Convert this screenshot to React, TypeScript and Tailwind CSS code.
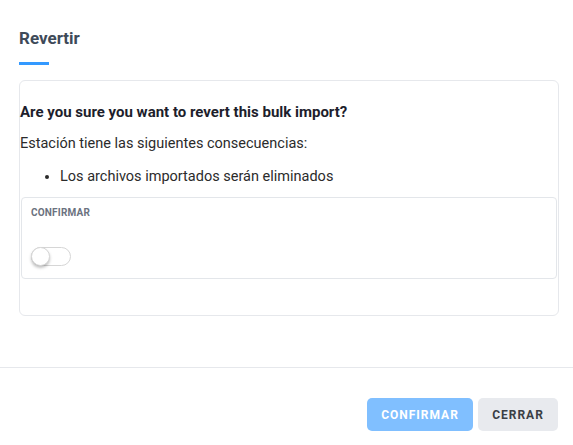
import React from "react";

export default function App() {
  return (
    <div className="w-[573px] h-[445px] bg-white flex flex-col" style={{ fontFamily: "Roboto, 'Noto Sans', sans-serif" }}>
      <div className="px-[19px] pt-[28px]">
        <div className="text-[17px] leading-[20px] font-bold text-[#3e4a59]">Revertir</div>
        <div className="mt-[14px] w-[30px] h-[3px] bg-[#3399ff]" />
        <div className="mt-[15px] w-[540px] h-[236px] border border-[#e6e8ec] rounded-[6px] flex flex-col">
          <div className="pt-[20px] text-[15px] leading-[22px] font-bold text-[#1d1e2c]">Are you sure you want to revert this bulk import?</div>
          <div className="mt-[10px] text-[14.5px] leading-[22px] text-[#2b2b2b]">Estación tiene las siguientes consecuencias:</div>
          <ul className="mt-[11px] list-disc pl-[40px] text-[14.5px] leading-[22px] text-[#2b2b2b]">
            <li>Los archivos importados serán eliminados</li>
          </ul>
          <div className="mt-[9px] mx-[1px] h-[82px] border border-[#e3e6ea] rounded-[4px] px-[9px] pt-[8px] flex flex-col">
            <div className="text-[10px] leading-[14px] font-bold text-[#6b7280] tracking-[0.2px]">CONFIRMAR</div>
            <div className="mt-[27px] w-[40px] h-[19px] rounded-full border border-[#d6d6d6] bg-white relative">
              <div className="absolute left-[-1px] top-[-1px] w-[19px] h-[19px] rounded-full bg-white border border-[#d6d6d6] shadow-[0_2px_3px_rgba(0,0,0,0.25)]" />
            </div>
          </div>
        </div>
      </div>
      <div className="mt-[51px] h-px w-full bg-[#e6e8ec]" />
      <div className="mt-[30px] flex justify-end gap-[5px] pr-[15px]">
        <button className="w-[106px] h-[33px] rounded-[5px] bg-[#80bfff] text-white text-[12px] font-bold tracking-[1px]">CONFIRMAR</button>
        <button className="w-[80px] h-[33px] rounded-[5px] bg-[#e8eaee] text-[#3a3f45] text-[12px] font-bold tracking-[1px]">CERRAR</button>
      </div>
    </div>
  );
}
